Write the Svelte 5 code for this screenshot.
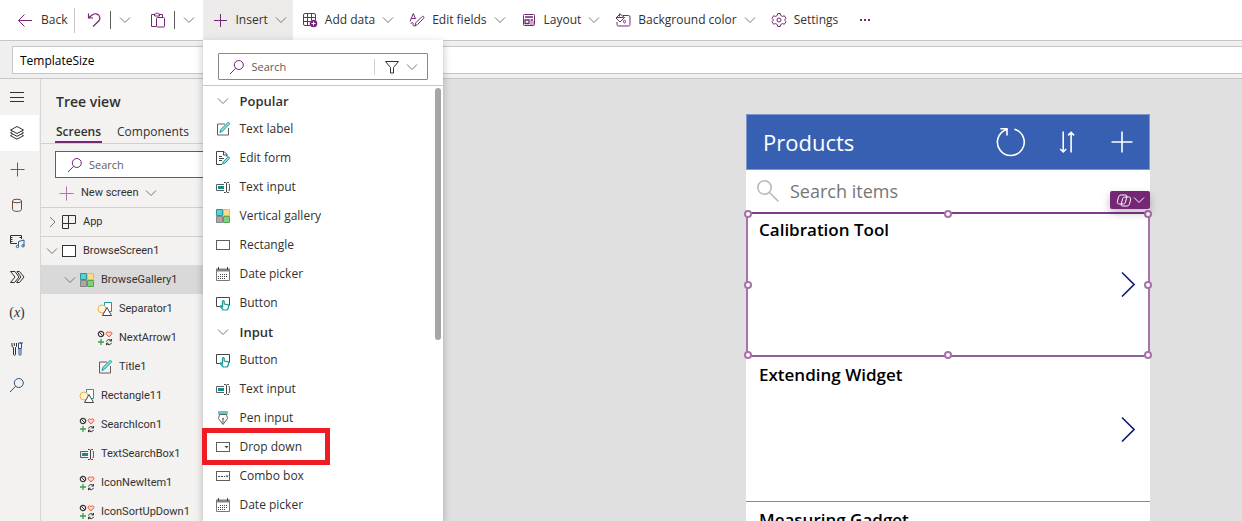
<script>
  const commands = [
    { icon: 'addData', label: 'Add data', menu: true },
    { icon: 'editFields', label: 'Edit fields', menu: true },
    { icon: 'layout', label: 'Layout', menu: true },
    { icon: 'paint', label: 'Background color', menu: true },
    { icon: 'gear', label: 'Settings', menu: false }
  ];

  const insertGroups = [
    {
      title: 'Popular',
      items: [
        { icon: 'label', label: 'Text label' },
        { icon: 'form', label: 'Edit form' },
        { icon: 'textInput', label: 'Text input' },
        { icon: 'gallery', label: 'Vertical gallery' },
        { icon: 'rectangle', label: 'Rectangle' },
        { icon: 'calendar', label: 'Date picker' },
        { icon: 'button', label: 'Button' }
      ]
    },
    {
      title: 'Input',
      items: [
        { icon: 'button', label: 'Button' },
        { icon: 'textInput', label: 'Text input' },
        { icon: 'pen', label: 'Pen input' },
        { icon: 'dropdown', label: 'Drop down', highlighted: true },
        { icon: 'combo', label: 'Combo box' },
        { icon: 'calendar', label: 'Date picker' }
      ]
    }
  ];

  const rail = [
    { icon: 'hamburger', label: 'Expand' },
    { icon: 'layers', label: 'Tree view', active: true },
    { icon: 'plusThin', label: 'Insert' },
    { icon: 'database', label: 'Data' },
    { icon: 'media', label: 'Media' },
    { icon: 'flow', label: 'Power Automate' },
    { icon: 'variable', label: 'Variables' },
    { icon: 'tools', label: 'Advanced tools' },
    { icon: 'search', label: 'Search' }
  ];

  const tree = [
    { icon: 'app', label: 'App', level: 0, chevron: 'right', ruled: true },
    { icon: 'screen', label: 'BrowseScreen1', level: 0, chevron: 'down', ruled: true },
    { icon: 'gallery', label: 'BrowseGallery1', level: 1, chevron: 'down', selected: true },
    { icon: 'shapes', label: 'Separator1', level: 2 },
    { icon: 'symbols', label: 'NextArrow1', level: 2 },
    { icon: 'label', label: 'Title1', level: 2 },
    { icon: 'shapes', label: 'Rectangle11', level: 1 },
    { icon: 'symbols', label: 'SearchIcon1', level: 1 },
    { icon: 'textInput', label: 'TextSearchBox1', level: 1 },
    { icon: 'symbols', label: 'IconNewItem1', level: 1 },
    { icon: 'symbols', label: 'IconSortUpDown1', level: 1 }
  ];

  const products = ['Calibration Tool', 'Extending Widget', 'Measuring Gadget'];
  const handles = ['nw', 'n', 'ne', 'e', 'se', 's', 'sw', 'w'];
</script>

{#snippet icon(name)}
  <svg class="icon i-{name}" viewBox="0 0 16 16" width="16" height="16" fill="none" stroke="currentColor" aria-hidden="true">
    {#if name === 'back'}
      <path d="M15 8.500H1.500M7.500 2.500l-6 6 6 6" />
    {:else if name === 'undo'}
      <path d="M2.500 1.500V6H7M2.800 5.800 6.200 3C8.600 1.200 11.500 1.400 13 3.500c1.500 2.200.9 4.300-.8 6L7 14.500" stroke-width="1.200" />
    {:else if name === 'paste'}
      <path d="M4.500 2.500H1.500v12H6M9.500 2.500h3V5M4.500 4V2h1.300c.3-1.300 2.100-1.300 2.400 0h1.300v2z" />
      <rect x="6.500" y="5.500" width="8" height="9.500" rx="1" />
    {:else if name === 'plus'}
      <path d="M8.500 2v13M2 8.500h13" />
    {:else if name === 'plusThin'}
      <path d="M8.500 1.500v14M1.500 8.500h14" />
    {:else if name === 'addData'}
      <path d="M8 13.500H3a1.500 1.500 0 0 1-1.500-1.500V3A1.500 1.500 0 0 1 3 1.500h9A1.500 1.500 0 0 1 13.500 3v5M5.500 1.500v12M9.500 1.500V8M1.500 5.500h12M1.500 9.500H8" />
      <circle cx="11.500" cy="11.500" r="3.800" fill="currentColor" stroke="none" />
      <path d="M11.500 9.500v4M9.500 11.500h4" stroke="#fff" />
    {:else if name === 'editFields'}
      <path d="M1 9.500 4.300 1.500 6.500 7M2.300 6.500h4M6 14l.8-3.200L13 4.600c1-1 2.700.6 1.700 1.700L8.500 12.500z M1.500 12c1.500-2 3-2 2.500.5-.3 1.200.7 1.700 2 1.200" />
    {:else if name === 'layout'}
      <rect x="2.500" y="2.500" width="11" height="11" rx="1" />
      <path d="M4 5h8M4 8h4v3.500H4zM9.500 8H12M9.500 10h1M11.500 10h1M9.500 12h1M11.500 12h1" stroke-width="1.300" />
    {:else if name === 'paint'}
      <path d="M8 3.500h5.500a1.500 1.500 0 0 1 1.500 1.500v7.500a1.500 1.500 0 0 1-1.500 1.500h-10A1.500 1.500 0 0 1 2 12.500V10" />
      <path d="m1 6 4-4 4.500 3.500L5 10zM1.500 5.500h7M4.500 4.500V1.500M8.500 9.500c.5-2 1.500-2 2 0 .2 2-2 2-2 0z" />
    {:else if name === 'gear'}
      <path d="m6.700 1.500-.5 2-1.600.9-2-.6L1 6.400 2.600 8 1 9.600l1.600 2.600 2-.6 1.600.9.500 2h2.600l.5-2 1.600-.9 2 .6L15 9.600 13.400 8 15 6.400l-1.600-2.600-2 .6-1.600-.9-.5-2z" stroke-linejoin="round" />
      <circle cx="8" cy="8" r="2" />
    {:else if name === 'search'}
      <circle cx="9.800" cy="6" r="4.500" />
      <path d="M6.600 9.300 1 15" />
    {:else if name === 'filter'}
      <path d="M1.500 2.500h13L9.500 8.500V14H6.500V8.500z" />
    {:else if name === 'label'}
      <path d="M13.500 7v7h-11V3H10" stroke="#605e5c" />
      <path d="M5 11.500 5.800 8.500 12.700 1.800c1-1 2.500.5 1.500 1.500L7.500 10.200z" stroke="#149a9b" fill="#9adfdd" />
    {:else if name === 'form'}
      <path d="M7 14.500H1.500v-13H9l3 3V7M8.500 1.500v3.500h3.500M4 6.500h3M4 8.500h5M4 10.500h3" stroke="#444" />
      <path d="m7.500 14 .8-2.500 4.500-4.300c1-.8 2.300.4 1.500 1.400L10 13z" stroke="#149a9b" fill="#9adfdd" />
    {:else if name === 'textInput'}
      <path d="M9 5.500H1.500v6H9M13.500 5.500h1v6h-1" stroke="#605e5c" />
      <path d="M3 8.500h6" stroke="#128d8e" stroke-width="3" />
      <path d="M9 3.500h1.500l1 .7 1-.7H14M9 13.500h1.500l1-.7 1 .7H14M11.500 4v9" stroke="#444" />
    {:else if name === 'gallery'}
      <path d="M1.500 1.500h6v6h-6z" fill="#5fcfcb" stroke="#1b9da0" />
      <path d="M8.500 1.500h6v6h-6z" fill="#ffd88a" stroke="#f2b950" />
      <path d="M1.500 8.500h6v6h-6z" fill="#aaa" stroke="#858585" />
      <path d="M8.500 8.500h6v6h-6z" fill="#86cb86" stroke="#4fa84f" />
    {:else if name === 'rectangle'}
      <rect x="1.500" y="3.500" width="13" height="9" stroke="#605e5c" />
    {:else if name === 'calendar'}
      <path d="M1.500 3.500h13v11h-13z" stroke="#797775" />
      <path d="M1 4h14" stroke="#858380" stroke-width="3" />
      <path d="M3.500 1v3M12.500 1v3" stroke="#444" />
      <path d="M5 8.500h8M3 10.500h10M3 12.500h8" stroke="#444" stroke-dasharray="1 1" />
    {:else if name === 'button'}
      <path d="M5 11.500H1.500v-9h13v8" stroke="#444" />
      <path d="M7.500 11.500V6.500c0-1.300 1.700-1.300 1.700 0V9l3.500.7c.8.2 1.200.8 1 1.600l-.7 2.500c-.3.900-.8 1.200-1.500 1.200H9c-.7 0-1.200-.3-1.600-.9L5 11.500c.4-.9 1.500-.9 2.500.3z" fill="#fff" stroke="#149a9b" stroke-width="1.200" />
    {:else if name === 'pen'}
      <path d="M3.500 1.500h9V4h-9z" fill="#5fcfcb" stroke="#5fc5c3" />
      <path d="M4.500 4.500 3.500 8.500 8 14.500l4.500-6-1-4zM8 14V9" stroke="#605e5c" />
      <circle cx="8" cy="8.500" r=".8" fill="#444" stroke="none" />
    {:else if name === 'dropdown'}
      <rect x="1.500" y="3.500" width="13" height="9" stroke="#605e5c" />
      <path d="M9.500 7h4l-2 2.200z" fill="#444" stroke="none" />
    {:else if name === 'combo'}
      <rect x="1.500" y="3.500" width="13" height="9" stroke="#605e5c" />
      <path d="M3 8.500h2M6 8.500h2M9 8.500h1" stroke="#444" />
      <path d="M10.500 7.500h3l-1.500 2z" fill="#444" stroke="none" />
    {:else if name === 'hamburger'}
      <path d="M1 3.500h14M1 8.500h14M1 12.500h14" />
    {:else if name === 'layers'}
      <path d="m8 1.500 6.500 3.500L8 8.500 1.500 5zM3.500 6.500l-2 1.300L8 11.300l6.500-3.500-2-1.300M3.500 9.500l-2 1.200L8 14.200l6.500-3.500-2-1.200" stroke-linejoin="round" />
    {:else if name === 'database'}
      <path d="M3.500 4v8.500c0 2.500 9 2.500 9 0V4" />
      <ellipse cx="8" cy="4" rx="4.500" ry="1.800" />
    {:else if name === 'media'}
      <path d="M8 10.500H1.500v-8h11V6M1.500 4.500h2M1.500 6.500h2M1.500 8.500h2M10.500 4.500h2" />
      <path d="M9.500 13.500V8.500l5.500-1.500v6" stroke="#2b5f8c" />
      <circle cx="8.500" cy="13.500" r="1.200" stroke="#2b5f8c" />
      <circle cx="14" cy="12.800" r="1.200" stroke="#2b5f8c" />
    {:else if name === 'flow'}
      <path d="M1.500 2.500h4.500l4 5.500-4.500 5.500h-4L6 8zM8 2.500h2.500L15 8l-4.500 5.500H7.500L12 8z" />
    {:else if name === 'tools'}
      <path d="M3 2v3.500l1.500 1v7c0 1 2 1 2 0v-7L7.500 5.500V2M5.300 2v3" />
      <path d="M9.500 7.500V2h3v5.500M10 7.500v6c0 1 2 1 2 0v-6h-3M11 2h3" stroke="#2b4f8c" />
    {:else if name === 'app'}
      <path d="M1.500 1.500h13v8h-13zM1.500 9.500v5h6v-13" />
    {:else if name === 'screen'}
      <rect x="1.500" y="2.500" width="13" height="11" fill="#fff" />
    {:else if name === 'shapes'}
      <path d="M7.500 6V1.500h7v9H12" stroke="#149a9b" fill="#fff" />
      <circle cx="5" cy="8" r="4" stroke="#f2b23d" fill="#fff4dc" />
      <path d="m10 6.500 4.500 8h-9z" stroke="#444" fill="#fff" />
    {:else if name === 'symbols'}
      <circle cx="4" cy="4" r="2.700" stroke="#333" stroke-width="1.200" />
      <path d="m2.200 2.200 3.600 3.600" stroke="#333" />
      <path d="M12 6.800 9.300 4.200C8.500 2.500 10.700.8 12 2.700c1.300-1.900 3.500-.2 2.700 1.500z" fill="#ffd9cc" stroke="#e8502d" />
      <path d="M4 9v6M1 12h6" stroke="#38a048" stroke-width="1.300" />
      <path d="M9.500 11.500c.6-2.200 3.500-2.500 4.800-.8M14.500 9v2h-2M14.500 12.800c-.6 2.200-3.500 2.500-4.800.8M9.500 15.200v-2h2" stroke="#333" />
    {:else if name === 'refresh'}
      <path d="M9.700 1.600A6.700 6.700 0 1 1 5.800 1.700M2.700 1.400h3.300v3.300" stroke-width=".8" />
    {:else if name === 'sort'}
      <path d="M4.700 2v11.500M3 12l1.700 1.700L6.400 12M9.200 14V2.500M7.500 4.200l1.700-1.700 1.700 1.700" stroke-width=".9" />
    {:else if name === 'copilot'}
      <path d="M5 3h4.500c1 0 1.500.4 1.300 1.300L9.500 10c-.3 1.300-1 2-2.300 2H3.500C1.500 12 1 11 1.500 9l1-3.800C2.900 3.700 3.600 3 5 3zM11 14H6.500c-1 0-1.500-.4-1.300-1.300L6.500 7c.3-1.300 1-2 2.300-2h3.700c2 0 2.500 1 2 3l-1 3.800c-.4 1.500-1.100 2.200-2.500 2.200z" />
    {/if}
  </svg>
{/snippet}

{#snippet chevron(direction = 'down')}
  <svg class="chevron" viewBox="0 0 12 12" width="12" height="12" fill="none" stroke="currentColor" aria-hidden="true">
    <path d={direction === 'down' ? 'M1 3.500 6 8.500l5-5' : 'M4 1l5 5-5 5'} />
  </svg>
{/snippet}

<div class="studio">
  <header class="commands">
    <button class="back">{@render icon('back')}<span>Back</span></button>
    <i class="rule tall"></i>
    <button class="bare" aria-label="Undo">{@render icon('undo')}</button>
    <i class="rule"></i>
    <button class="more" aria-label="Undo options">{@render chevron()}</button>
    <button class="bare" aria-label="Paste">{@render icon('paste')}</button>
    <i class="rule"></i>
    <button class="more" aria-label="Paste options">{@render chevron()}</button>

    <div class="insert">
      <button class="command open" aria-expanded="true">{@render icon('plus')}<span>Insert</span>{@render chevron()}</button>

      <section class="menu" aria-label="Insert">
        <div class="menu-top">
          <div class="find">
            {@render icon('search')}
            <input type="text" placeholder="Search" aria-label="Search controls" />
            <button class="filter" aria-label="Filter">{@render icon('filter')}{@render chevron()}</button>
          </div>
        </div>
        <div class="menu-list">
          {#each insertGroups as group}
            <button class="group-title">{@render chevron()}<span>{group.title}</span></button>
            <ul>
              {#each group.items as item}
                <li class:highlighted={item.highlighted}>
                  <button>{@render icon(item.icon)}<span>{item.label}</span></button>
                </li>
              {/each}
            </ul>
          {/each}
        </div>
        <div class="thumb"></div>
      </section>
    </div>

    {#each commands as command}
      <button class="command">
        {@render icon(command.icon)}<span>{command.label}</span>
        {#if command.menu}{@render chevron()}{/if}
      </button>
    {/each}
    <button class="ellipsis" aria-label="More commands"><i></i><i></i><i></i></button>
  </header>

  <div class="formula">
    <input type="text" value="TemplateSize" aria-label="Property" />
  </div>

  <div class="workspace">
    <nav class="rail" aria-label="Panels">
      {#each rail as entry}
        <button class:active={entry.active} aria-label={entry.label}>
          {#if entry.icon === 'variable'}<span class="variable">(<em>x</em>)</span>{:else}{@render icon(entry.icon)}{/if}
        </button>
      {/each}
    </nav>

    <aside class="tree">
      <h2>Tree view</h2>
      <div class="tabs" role="tablist">
        <button role="tab" aria-selected="true" class="current">Screens</button>
        <button role="tab" aria-selected="false">Components</button>
      </div>
      <div class="tree-find">
        {@render icon('search')}
        <input type="text" placeholder="Search" aria-label="Search tree" />
      </div>
      <button class="new-screen">{@render icon('plusThin')}<span>New screen</span>{@render chevron()}</button>
      <ul>
        {#each tree as node}
          <li class="level-{node.level}" class:ruled={node.ruled} class:selected={node.selected}>
            <span class="twisty">{#if node.chevron}{@render chevron(node.chevron)}{/if}</span>
            {@render icon(node.icon)}
            <span>{node.label}</span>
          </li>
        {/each}
      </ul>
    </aside>

    <main class="canvas">
      <div class="phone">
        <div class="title-bar">
          <h1>Products</h1>
          <button aria-label="Refresh">{@render icon('refresh')}</button>
          <button aria-label="Sort">{@render icon('sort')}</button>
          <button aria-label="New item">
            <svg viewBox="0 0 22 22" width="22" height="22" stroke="currentColor" stroke-width="1.600" aria-hidden="true"><path d="M11 .5v21M.5 11h21" /></svg>
          </button>
        </div>
        <div class="item-search">
          <svg viewBox="0 0 24 24" width="24" height="24" fill="none" stroke="#b8b8b8" stroke-width="1.600" aria-hidden="true">
            <circle cx="8.500" cy="8.500" r="6.700" /><path d="m13.500 13.500 9 9" />
          </svg>
          <input type="text" placeholder="Search items" aria-label="Search items" />
        </div>
        {#each products as product, index}
          <article>
            <h3>{product}</h3>
            <button aria-label="Open {product}">
              <svg viewBox="0 0 14 26" width="14" height="26" fill="none" stroke="#0f1f77" stroke-width="1.600" aria-hidden="true"><path d="m1 1.500 12 12-12 12" /></svg>
            </button>
            {#if index === 0}
              <div class="selection">
                {#each handles as handle}<i class={handle}></i>{/each}
                <button class="copilot-tag" aria-label="Copilot">{@render icon('copilot')}{@render chevron()}</button>
              </div>
            {/if}
          </article>
        {/each}
      </div>
    </main>
  </div>
</div>

<style>
  :global(body) {
    margin: 0;
    overflow: hidden;
  }

  .studio {
    display: flex;
    flex-direction: column;
    height: 100vh;
    font-family: 'Open Sans', 'Noto Sans', sans-serif;
    font-size: 12px;
    line-height: 16px;
    color: #323130;
    background: #efefef;
  }

  .studio *,
  .studio *::after {
    box-sizing: border-box;
  }

  button,
  input {
    margin: 0;
    padding: 0;
    border: 0;
    background: none;
    font: inherit;
    color: inherit;
  }

  input {
    min-width: 0;
    outline: none;
  }

  ul {
    margin: 0;
    padding: 0;
    list-style: none;
  }

  svg {
    display: block;
    flex: none;
  }

  .chevron {
    color: #797775;
  }

  .commands {
    flex: none;
    display: flex;
    align-items: center;
    height: 41px;
    border-bottom: 1px solid #c8c6c4;
    background: #fff;
    white-space: nowrap;
  }

  .commands > button .icon,
  .open .icon,
  .find .i-search {
    color: #742774;
  }

  .back {
    display: flex;
    align-items: center;
    gap: 8px;
    padding: 0 7px 0 17px;
  }

  .rule {
    width: 1px;
    height: 18px;
    background: #605e5c;
  }

  .rule.tall {
    height: 25px;
    background: #c8c6c4;
  }

  .bare {
    padding: 0 8px 0 11px;
  }

  .more {
    padding: 0 8px;
  }

  .command {
    display: flex;
    align-items: center;
    gap: 7px;
    height: 40px;
    padding: 0 6px 0 9px;
  }

  .command.open {
    background: #edebe9;
  }

  .ellipsis {
    display: flex;
    gap: 2px;
    padding: 0 16px;
  }

  .ellipsis i {
    width: 2px;
    height: 2px;
    background: #742774;
  }

  .insert {
    position: relative;
    align-self: flex-start;
  }

  .menu {
    position: absolute;
    z-index: 2;
    top: 100%;
    left: 0;
    width: 240px;
    height: calc(100vh - 40px);
    background: #fff;
    box-shadow: 0 3px 8px rgba(0, 0, 0, 0.25);
  }

  .menu-top {
    padding: 13px 15px 5px;
    border-bottom: 1px solid #c8c6c4;
  }

  .find {
    display: flex;
    align-items: center;
    height: 27px;
    padding-left: 10px;
    border: 1px solid #8a8886;
    border-radius: 1px;
    font-size: 11px;
  }

  .find input {
    flex: 1;
    margin-left: 6px;
  }

  .studio ::placeholder {
    color: #605e5c;
    opacity: 1;
  }

  .filter {
    display: flex;
    align-items: center;
    gap: 6px;
    padding: 0 9px;
    border-left: 1px solid #d2d0ce;
  }

  .menu-list {
    padding-top: 1px;
  }

  .menu-list button {
    display: flex;
    align-items: center;
    gap: 8px;
    width: 100%;
    height: 29px;
    padding: 0 0 1px 12px;
    text-align: left;
  }

  .menu-list .group-title {
    gap: 10px;
    height: 28px;
    padding: 0 0 0 14px;
    font-size: 13px;
    font-weight: 600;
  }

  .highlighted {
    position: relative;
  }

  .highlighted::after {
    content: '';
    position: absolute;
    top: -5px;
    left: -1px;
    width: 128px;
    height: 37px;
    border: 5px solid #ee1c25;
  }

  .thumb {
    position: absolute;
    top: 48px;
    right: 2px;
    width: 6px;
    height: 252px;
    border-radius: 3px;
    background: #a6a6a6;
  }

  .formula {
    flex: none;
    height: 38px;
    padding: 5px 0 4px 12px;
    border-bottom: 1px solid #c8c6c4;
  }

  .formula input {
    width: 100%;
    height: 28px;
    padding-left: 7px;
    border: 1px solid #c8c6c4;
    border-right: 0;
    background: #fff;
    color: #000;
  }

  .workspace {
    flex: 1;
    display: flex;
    min-height: 0;
    overflow: hidden;
    background: #f3f2f1;
  }

  .rail {
    flex: none;
    width: 41px;
    border-right: 1px solid #d8d6d4;
  }

  .rail button {
    display: flex;
    align-items: center;
    justify-content: center;
    width: 39px;
    height: 36px;
    padding-right: 5px;
  }

  .rail .active {
    background: #fff;
  }

  .rail .i-plusThin {
    color: #4f6b58;
  }

  .rail .i-database {
    color: #6b4a3b;
  }

  .rail .i-search {
    color: #2b4f7c;
  }

  .variable {
    font-family: 'Liberation Serif', serif;
    font-size: 14px;
  }

  .tree {
    flex: none;
    width: 260px;
    white-space: nowrap;
  }

  h2 {
    margin: 0;
    padding: 13px 15px 11px;
    font-size: 14px;
    font-weight: 600;
    line-height: 20px;
  }

  .tabs {
    display: flex;
    gap: 14px;
    padding: 0 14px;
    border-bottom: 1px solid #d2d0ce;
  }

  .tabs button {
    height: 20px;
    padding: 0 1px 0;
    border-bottom: 2px solid transparent;
  }

  .tabs .current {
    border-color: #742774;
    font-weight: 600;
  }

  .tree-find {
    display: flex;
    align-items: center;
    gap: 6px;
    height: 27px;
    margin: 7px 14px 0;
    padding-left: 11px;
    border: 1px solid #605e5c;
    background: #fff;
    font-size: 11px;
  }

  .tree-find .i-search {
    color: #742774;
  }

  .new-screen {
    display: flex;
    align-items: center;
    gap: 7px;
    height: 29px;
    padding-left: 17px;
    font-family: Roboto, 'Open Sans', sans-serif;
    font-size: 11px;
  }

  .new-screen .icon {
    color: #a77ba7;
  }

  .tree ul {
    font-family: Roboto, 'Open Sans', sans-serif;
    font-size: 11px;
  }

  .tree li {
    display: flex;
    align-items: center;
    gap: 6px;
    height: 29px;
    padding-left: 5px;
  }

  .tree .level-1 {
    padding-left: 23px;
  }

  .tree .level-2 {
    padding-left: 41px;
  }

  .tree .ruled {
    border-top: 1px solid #d2d0ce;
  }

  .tree .selected {
    background: #d9d9d9;
  }

  .twisty {
    width: 12px;
    margin-right: -3px;
  }

  .canvas {
    flex: 1;
    display: flex;
    justify-content: flex-end;
    padding: 35px 92px 0 0;
    background: #e0e0e0;
  }

  .phone {
    width: 404px;
    color: #000;
  }

  .title-bar {
    display: flex;
    align-items: center;
    gap: 28px;
    height: 56px;
    padding: 0 16px;
    border: 1px solid #7d97ce;
    background: #3860b2;
    color: #fff;
  }

  h1 {
    flex: 1;
    margin: 0;
    font-size: 22px;
    font-weight: 400;
    line-height: 30px;
  }

  .title-bar .i-refresh {
    width: 32px;
    height: 32px;
  }

  .title-bar .i-sort {
    width: 28px;
    height: 28px;
  }

  .item-search {
    display: flex;
    align-items: center;
    gap: 10px;
    height: 42px;
    padding-left: 10px;
    background: #fff;
    font-size: 18px;
  }

  .item-search ::placeholder {
    color: #767676;
  }

  .item-search input {
    height: 30px;
  }

  article {
    position: relative;
    display: flex;
    align-items: center;
    justify-content: space-between;
    height: 145px;
    padding: 0 15px 0 13px;
    border-bottom: 1px solid #8088b8;
    background: #fff;
  }

  h3 {
    align-self: flex-start;
    margin: 6px 0 0;
    font-size: 17px;
    font-weight: 600;
    line-height: 24px;
  }

  .selection {
    position: absolute;
    inset: 0 0 -1px;
    border: 2px solid #a871a8;
    border-top-color: #7b3b86;
    border-bottom-color: #8d5f9c;
    z-index: 1;
  }

  .selection > i {
    position: absolute;
    width: 8px;
    height: 8px;
    margin: -4px;
    border: 2px solid #a871a8;
    border-radius: 50%;
    background: #fff;
  }

  .nw, .n, .ne { top: 0; }
  .sw, .s, .se { top: 100%; }
  .w, .e { top: 50%; }
  .nw, .w, .sw { left: 0; }
  .n, .s { left: 50%; }
  .ne, .e, .se { left: 100%; }

  .copilot-tag {
    position: absolute;
    right: -2px;
    bottom: 100%;
    display: flex;
    align-items: center;
    justify-content: center;
    gap: 1px;
    width: 40px;
    height: 18px;
    margin-bottom: 5px;
    border-radius: 2px;
    background: #742774;
    box-shadow: 0 4px 8px rgba(0, 0, 0, 0.25);
    color: #fff;
  }

  .copilot-tag .chevron {
    color: #fff;
  }
</style>
